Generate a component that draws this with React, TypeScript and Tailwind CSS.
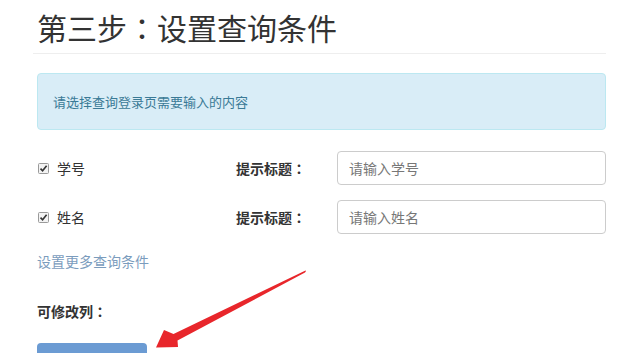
import React from "react"

const font = { fontFamily: '"Noto Sans CJK SC", "Noto Sans", sans-serif' }
// fullwidth colon centred in its cell, as in the screenshot
const Colon = () => (
  <span style={{ fontFamily: '"Noto Sans CJK TC", "Noto Sans CJK SC", sans-serif' }}>：</span>
)

// small checked checkbox, drawn to match the old browser look
const Check = () => (
  <svg width="11" height="11" viewBox="0 0 11 11" className="shrink-0">
    <rect x="0.5" y="0.5" width="10" height="10" rx="1" fill="#f3f3f3" stroke="#9a9a9a" />
    <path d="M2.5 5.6 L4.6 7.8 L8.6 2.8" fill="none" stroke="#333" strokeWidth="1.6" />
  </svg>
)

const fields = [
  { label: "学号", placeholder: "请输入学号" },
  { label: "姓名", placeholder: "请输入姓名" },
]

export default function App() {
  return (
    <div className="relative h-[353px] w-[640px] overflow-hidden bg-white text-[#333]" style={font}>
      <div className="ml-[37px] w-[569px]">
        <h1 className="pt-[6px] text-[30px] leading-[42px] font-normal text-[#333]">
          第三步<Colon />设置查询条件
        </h1>
        <div className="mt-[5px] -ml-[4px] h-px bg-[#eeeeee]" />

        <div className="mt-[19px] flex h-[57px] items-center rounded-[4px] border border-[#bce8f1] bg-[#d9edf7] px-[15px] text-[13px] text-[#3a7a96]">
          请选择查询登录页需要输入的内容
        </div>

        <div className="mt-[21px] flex flex-col gap-[15px]">
          {fields.map((f) => (
            <div key={f.label} className="flex h-[34px] items-center text-[14px]">
              <div className="flex w-[199px] items-center gap-[8px] pl-[1px]">
                <Check />
                <span>{f.label}</span>
              </div>
              <div className="w-[101px] font-bold text-[#333]">
                提示标题<Colon />
              </div>
              <input
                className="h-[34px] flex-1 rounded-[4px] border border-[#cccccc] px-[11px] text-[14px] outline-none placeholder:text-[#777]"
                placeholder={f.placeholder}
              />
            </div>
          ))}
        </div>

        <div className="mt-[17px] text-[14px] leading-[20px] text-[#7b9cbd]">设置更多查询条件</div>

        <div className="mt-[30px] text-[14px] leading-[20px] font-bold text-[#333]">
          可修改列<Colon />
        </div>

        <div className="mt-[22px] h-[34px] w-[110px] rounded-[4px] bg-[#6b9bd3]" />
      </div>

      {/* red annotation arrow */}
      <svg className="pointer-events-none absolute left-0 top-0" width="640" height="353">
        <path
          d="M306 271 L305 272.5 L177.5 340.5 L178 347 L156 347.5 L164 330 L173.5 334 L305.5 270.5 Z"
          fill="#e8262b"
        />
      </svg>
    </div>
  )
}
